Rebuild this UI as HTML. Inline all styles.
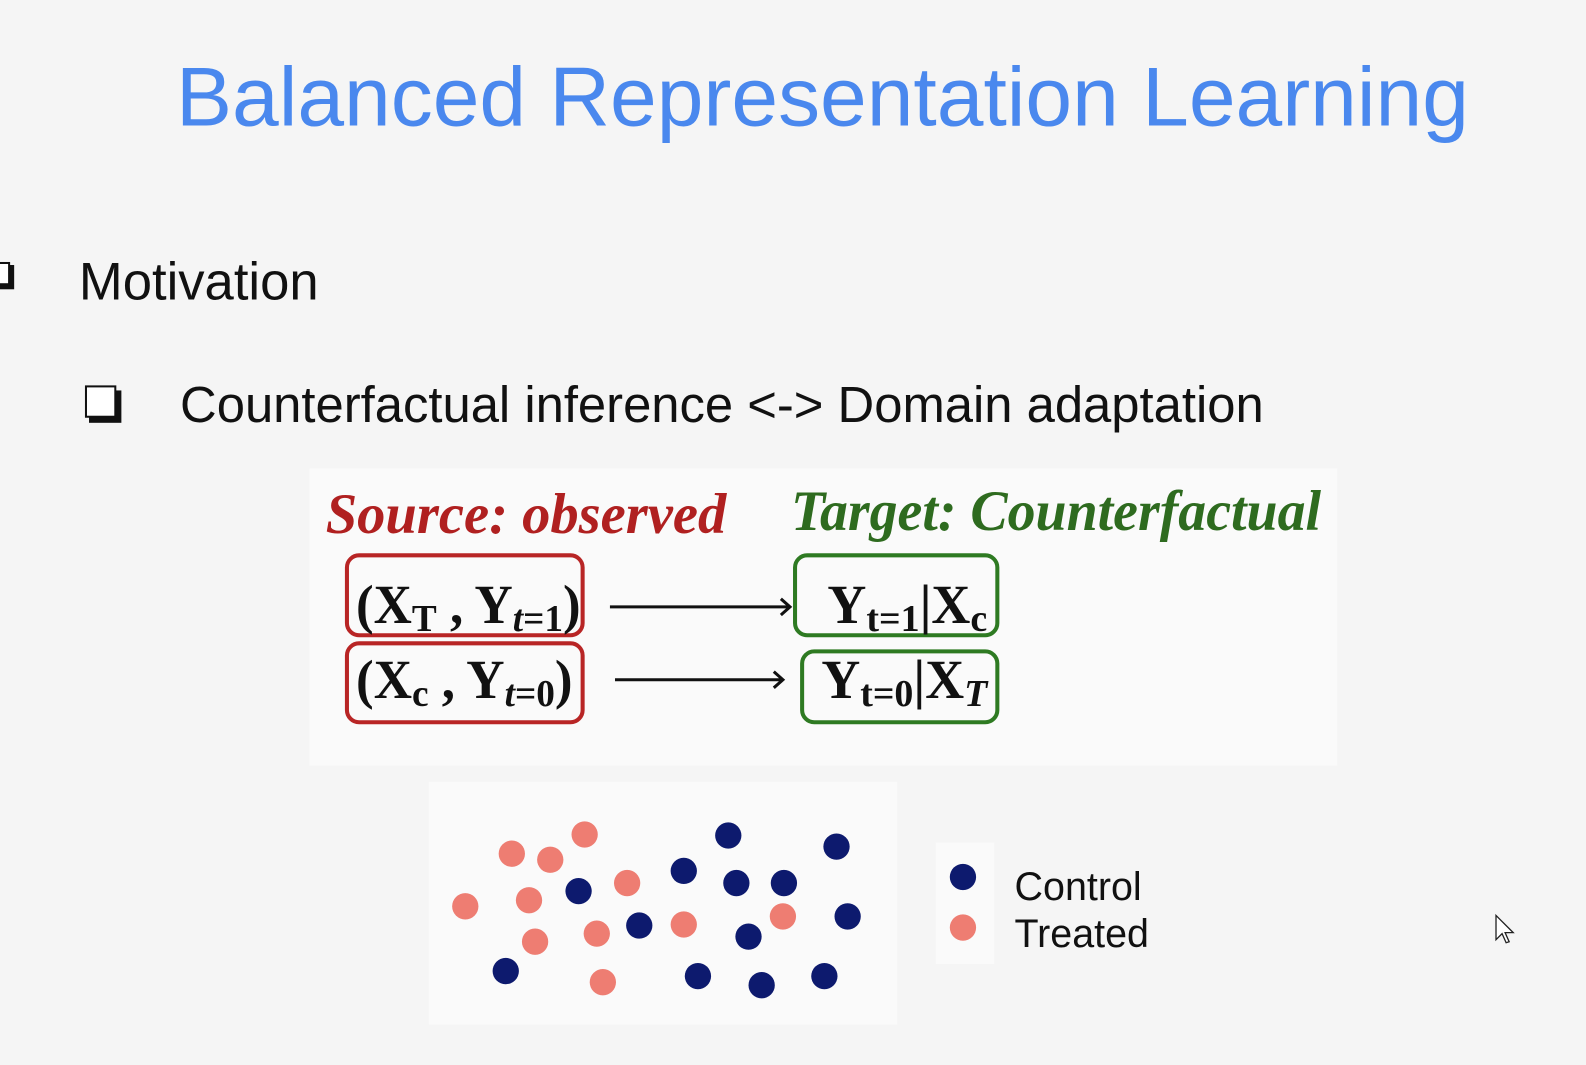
<!DOCTYPE html>
<html><head><style>
html,body{margin:0;padding:0;width:1586px;height:1065px;background:#f5f5f5;overflow:hidden;font-family:"Liberation Sans",sans-serif;}
#w{position:absolute;left:0;top:0;width:1568px;height:1053px;transform:scale(1.0115);transform-origin:0 0;}
.t{position:absolute;white-space:nowrap;}
</style></head><body><div id="w">
<div class="t" style="left:174px;top:48px;font-size:83px;color:#4a88ee;">Balanced Representation Learning</div>
<div class="t" style="left:78px;top:249px;font-size:52px;color:#111;">Motivation</div>
<div class="t" style="left:178px;top:371px;font-size:50.2px;color:#111;">Counterfactual inference &lt;-&gt; Domain adaptation</div>
<svg width="1568" height="1053" style="position:absolute;left:0;top:0">
 <rect x="-8" y="262" width="22" height="24" fill="#111"/><rect x="-10" y="260" width="19" height="21" fill="#fff" stroke="#111" stroke-width="2"/>
 <rect x="88" y="386" width="32" height="32" fill="#111"/><rect x="85" y="382" width="29" height="30" fill="#fff" stroke="#111" stroke-width="2"/>
 <rect x="306" y="463" width="1016" height="294" fill="#fafafa"/>
 <rect x="424" y="773" width="463" height="240" fill="#fafafa"/>
 <rect x="925" y="833" width="58" height="120" fill="#fafafa"/>
 <g font-family="Liberation Serif,serif" font-weight="bold" font-style="italic" font-size="56">
  <text x="322" y="527" fill="#b02020" textLength="396" lengthAdjust="spacingAndGlyphs">Source: observed</text>
  <text x="782" y="524" fill="#2e6b1f" textLength="524" lengthAdjust="spacingAndGlyphs">Target: Counterfactual</text>
 </g>
 <g fill="none" stroke-width="4">
  <rect x="343" y="549" width="233" height="79" rx="12" stroke="#b82525"/>
  <rect x="343" y="636" width="233" height="78" rx="12" stroke="#b82525"/>
  <rect x="786" y="549" width="200" height="79" rx="12" stroke="#2e7a22"/>
  <rect x="793" y="644" width="193" height="70" rx="12" stroke="#2e7a22"/>
 </g>
 <g stroke="#111" stroke-width="3" fill="none">
  <path d="M603 600H781M772 592l9 8-9 8"/>
  <path d="M608 672H774M765 664l9 8-9 8"/>
 </g>
 <g font-family="Liberation Serif,serif" font-weight="bold" fill="#111" font-size="54">
  <text x="352" y="616" textLength="222" lengthAdjust="spacingAndGlyphs">(X<tspan font-size="38" dy="8">T</tspan><tspan dy="-8"> , Y</tspan><tspan font-size="38" dy="8"><tspan font-style="italic">t</tspan>=1</tspan><tspan dy="-8">)</tspan></text>
  <text x="352" y="690" textLength="214" lengthAdjust="spacingAndGlyphs">(X<tspan font-size="38" dy="8">c</tspan><tspan dy="-8"> , Y</tspan><tspan font-size="38" dy="8"><tspan font-style="italic">t</tspan>=0</tspan><tspan dy="-8">)</tspan></text>
  <text x="818" y="616" textLength="158" lengthAdjust="spacingAndGlyphs">Y<tspan font-size="38" dy="8">t=1</tspan><tspan dy="-8">|X</tspan><tspan font-size="38" dy="8">c</tspan></text>
  <text x="812" y="690" textLength="164" lengthAdjust="spacingAndGlyphs">Y<tspan font-size="38" dy="8">t=0</tspan><tspan dy="-8">|X</tspan><tspan font-size="38" dy="8" font-style="italic">T</tspan></text>
 </g>
 <g fill="#ee7d72">
  <circle cx="506" cy="844" r="13"/><circle cx="544" cy="850" r="13"/><circle cx="578" cy="825" r="13"/><circle cx="460" cy="896" r="13"/><circle cx="523" cy="890" r="13"/><circle cx="620" cy="873" r="13"/><circle cx="529" cy="931" r="13"/><circle cx="590" cy="923" r="13"/><circle cx="676" cy="914" r="13"/><circle cx="774" cy="906" r="13"/><circle cx="596" cy="971" r="13"/><circle cx="952" cy="917" r="13"/>
 </g>
 <g fill="#0d1a6e">
  <circle cx="720" cy="826" r="13"/><circle cx="827" cy="837" r="13"/><circle cx="676" cy="861" r="13"/><circle cx="728" cy="873" r="13"/><circle cx="775" cy="873" r="13"/><circle cx="572" cy="881" r="13"/><circle cx="632" cy="915" r="13"/><circle cx="740" cy="926" r="13"/><circle cx="838" cy="906" r="13"/><circle cx="500" cy="960" r="13"/><circle cx="690" cy="965" r="13"/><circle cx="753" cy="974" r="13"/><circle cx="815" cy="965" r="13"/><circle cx="952" cy="867" r="13"/>
 </g>
 <g font-family="Liberation Sans,sans-serif" font-size="39" fill="#111">
  <text x="1003" y="890">Control</text><text x="1003" y="936">Treated</text>
 </g>
 <path d="M1479 905v24l6-6 4 9 3-1-4-9h8z" fill="#fff" stroke="#222" stroke-width="1.3"/>
</svg>
</div></body></html>
